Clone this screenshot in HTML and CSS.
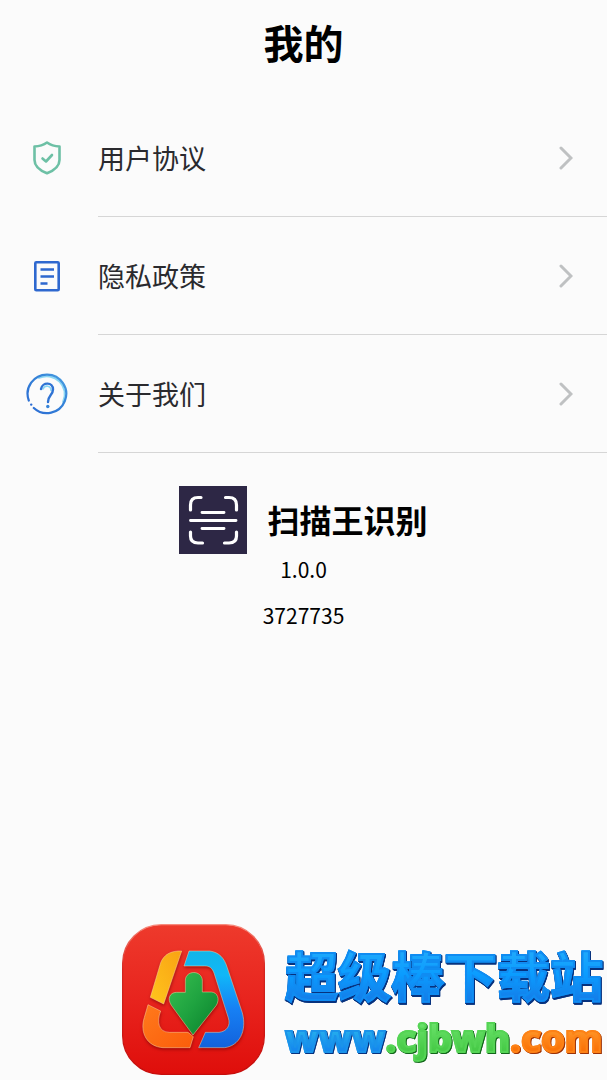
FILE: index.html
```html
<!DOCTYPE html>
<html lang="zh-CN">
<head>
  <meta charset="UTF-8" />
  <meta name="viewport" content="width=device-width, initial-scale=1.0" />
  <title>我的</title>
  <link rel="stylesheet" href="styles.css">
</head>
<body>

  <!-- Header -->
  <header class="header">
    <h1>我的</h1>
  </header>

  <!-- Menu -->
  <nav class="menu">
    <a class="menu-item" href="#">
      <span class="menu-icon">
        <svg width="42" height="42" viewBox="0 0 42 42" fill="none" stroke="#6dc0a5" stroke-width="2.6" stroke-linejoin="round" stroke-linecap="round">
          <path d="M21 5.500C17.500 8 13 9.300 8.500 9.500V23C8.500 29 14 33.500 21 36.300C28 33.500 33.500 29 33.500 23V9.500C29 9.300 24.500 8 21 5.500Z" />
          <path d="M16.500 21.500L20 24.500L26 18" />
        </svg>
      </span>
      <span class="menu-label">用户协议</span>
      <svg class="arrow" width="14" height="24" viewBox="0 0 14 24"><path d="M2 2L12 12L2 22" /></svg>
    </a>
    <a class="menu-item" href="#">
      <span class="menu-icon">
        <svg width="42" height="42" viewBox="0 0 42 42" fill="none" stroke="#2e68cf" stroke-width="2.600">
          <rect x="9.300" y="7.300" width="23.400" height="28" rx="1" />
          <path d="M14.500 14.500H28M14.500 21.500H28M14.500 28.500H21.500" />
        </svg>
      </span>
      <span class="menu-label">隐私政策</span>
      <svg class="arrow" width="14" height="24" viewBox="0 0 14 24"><path d="M2 2L12 12L2 22" /></svg>
    </a>
    <a class="menu-item" href="#">
      <span class="menu-icon">
        <svg width="42" height="42" viewBox="-1 -1 42 42" fill="none" stroke-linecap="round">
          <defs>
            <linearGradient id="ring" x1="0" y1="1" x2="1" y2="0">
              <stop offset="0" stop-color="#2b6bd3" />
              <stop offset="0.600" stop-color="#3583d8" />
              <stop offset="1" stop-color="#4a9fe2" />
            </linearGradient>
          </defs>
          <path d="M12 4A18 18 0 0 1 36 28" stroke="#8ad6f3" stroke-width="1.800" />
          <path d="M1.800 26.500A19.300 19.300 0 1 1 6.800 34" stroke="url(#ring)" stroke-width="2.200" />
          <circle cx="4.200" cy="30.600" r="1.200" fill="#2b6bd3" />
          <path d="M16 15C18 10.500 24 11.500 24 16.500" stroke="#8ad6f3" stroke-width="1.600" />
          <path d="M14 15C15.500 7.500 26 8 26 15.500C26 21 21 21 21 28" stroke="#2f73d4" stroke-width="2.400" />
          <circle cx="20.800" cy="32.500" r="1.700" fill="#3583d8" />
        </svg>
      </span>
      <span class="menu-label">关于我们</span>
      <svg class="arrow" width="14" height="24" viewBox="0 0 14 24"><path d="M2 2L12 12L2 22" /></svg>
    </a>
  </nav>

  <!-- App info -->
  <main class="about">
    <div class="app">
      <svg class="app-icon" width="68" height="68" viewBox="0 0 68 68" fill="none" stroke="#fff" stroke-width="3.200" stroke-linecap="round">
        <rect width="68" height="68" fill="#2d2745" stroke="none" />
        <path d="M11.500 24V19Q11.500 11.500 19 11.500H22M46.500 11.500H50Q57.500 11.500 57.500 19V24M11.500 46V50Q11.500 57 19 57H23.500M45.500 57H50Q57.500 57 57.500 50V46" />
        <path d="M23 26.500H45M11.500 34.500H57M23 42.500H45" stroke-width="2.900" />
      </svg>
      <h2>扫描王识别</h2>
    </div>
    <p>1.0.0</p>
    <p>3727735</p>
  </main>

  <!-- Download site -->
  <footer class="site">
    <svg class="site-logo" width="143" height="151" viewBox="39 27 429 453">
      <defs>
        <linearGradient id="red" x1="0" y1="0" x2="0" y2="1">
          <stop offset="0" stop-color="#ee3a2c" />
          <stop offset="0.500" stop-color="#e8241e" />
          <stop offset="1" stop-color="#df0e0b" />
        </linearGradient>
        <linearGradient id="edge" x1="0" y1="0" x2="0" y2="1">
          <stop offset="0" stop-color="#f78a7c" />
          <stop offset="0.300" stop-color="#d5251f" />
          <stop offset="1" stop-color="#c60d0b" />
        </linearGradient>
        <linearGradient id="yellow" x1="1" y1="0" x2="0" y2="1">
          <stop offset="0" stop-color="#f9a213" />
          <stop offset="1" stop-color="#ffc51d" />
        </linearGradient>
        <linearGradient id="orange" x1="0" y1="0" x2="1" y2="1">
          <stop offset="0" stop-color="#ff7a1c" />
          <stop offset="1" stop-color="#fb5d0b" />
        </linearGradient>
        <linearGradient id="blue" x1="0" y1="0" x2="0" y2="1">
          <stop offset="0" stop-color="#12b5e8" />
          <stop offset="0.250" stop-color="#10b7f8" />
          <stop offset="0.600" stop-color="#1780f4" />
          <stop offset="1" stop-color="#1262dc" />
        </linearGradient>
        <linearGradient id="green" x1="0" y1="0" x2="1" y2="1">
          <stop offset="0.100" stop-color="#34b94d" />
          <stop offset="0.500" stop-color="#1fa340" />
          <stop offset="1" stop-color="#087f2b" />
        </linearGradient>
      </defs>
      <rect x="41" y="29" width="425" height="449" rx="116" fill="url(#red)" stroke="url(#edge)" stroke-width="4" />
      <g class="logo-parts">
        <path d="M218 108H207C181 110 164 121 155 143L124 247L164 267Z" fill="url(#yellow)" />
        <path d="M117 269L155 288C142 322 149 351 181 352H237L253 365L243 398H162C115 395 91 354 106 307Z" fill="url(#orange)" />
        <path d="M240 108H302C331 112 346 129 355 158L400 293C415 349 390 393 347 398H269L289 352H330C354 349 365 332 358 309L315 174C309 158 301 153 287 153H225Z" fill="url(#blue)" />
        <path d="M229 232V195C231 165 277 165 280 195V231H307C326 232 333 253 322 271L252 360L187 271C174 251 182 233 202 232Z" fill="url(#green)" />
      </g>
    </svg>
    <div class="site-text">
      <strong class="site-name">超级棒下载站</strong>
      <a class="site-url" href="#"><span class="url-blue">www</span><span class="url-green">.cjbwh</span><span class="url-orange">.com</span></a>
    </div>
  </footer>

</body>
</html>
```
FILE: styles.css
```css
* {
  box-sizing: border-box;
}

body {
  margin: 0;
  min-height: 100vh;
  display: flex;
  flex-direction: column;
  background-color: #fbfbfb;
  color: #000;
  font-family: "Noto Sans CJK SC", sans-serif;
}

h1, h2, p {
  margin: 0;
}

/* Header */
.header {
  padding: 12px 0 27px;
  text-align: center;
}

h1 {
  font-size: 40px;
  line-height: 60px;
}

/* Menu, the divider starts at the label */
.menu-item {
  display: flex;
  align-items: center;
  height: 118px;
  padding-left: 26px;
  background: linear-gradient(#d6d6d6, #d6d6d6) 98px 100% / 100% 1px no-repeat;
  color: #2a2a2e;
  text-decoration: none;
}

.menu-icon {
  display: flex;
  width: 72px;
}

.menu-label {
  flex: 1;
  padding-bottom: 2px;
  font-size: 27px;
}

.arrow {
  margin-right: 34px;
  fill: none;
  stroke: #bfc1c2;
  stroke-width: 3;
  stroke-linecap: round;
}

/* App info */
.about {
  padding-top: 33px;
  text-align: center;
}

.app {
  display: flex;
  justify-content: center;
  align-items: center;
  gap: 20px;
}

h2 {
  padding-bottom: 2px;
  font-size: 32px;
  line-height: 48px;
}

.about p {
  font-size: 21px;
  line-height: 30px;
  margin-bottom: 16px;
}

/* Download site */
.site {
  display: flex;
  align-items: center;
  justify-content: flex-end;
  gap: 20px;
  margin-top: auto;
  padding: 0 4px 5px 0;
}

.site-logo {
  flex: none;
}

.logo-parts {
  filter: drop-shadow(1px 5px 4px rgba(110, 0, 0, 0.6));
  stroke: rgba(255, 225, 170, 0.7);
  stroke-width: 2;
}

.site-text {
  display: flex;
  flex-direction: column;
  padding-bottom: 2px;
  white-space: nowrap;
}

.site-name,
.site-url span {
  color: transparent;
  -webkit-background-clip: text;
  background-clip: text;
}

.site-name {
  font-size: 53px;
  font-weight: 700;
  line-height: 77px;
  background-image: linear-gradient(#1fa9fb 20%, #0a9cff 50%, #1677e4 90%);
  -webkit-text-stroke: 2px #108cf2;
  filter: drop-shadow(1px 1px 0 #07327e) drop-shadow(0 1px 0 #07327e);
}

.site-url {
  display: flex;
  font-family: "Noto Sans", sans-serif;
  font-size: 38px;
  font-weight: 800;
  line-height: 48px;
  text-decoration: none;
}

.url-blue {
  background-image: linear-gradient(#27b5ed 30%, #1589ee 75%);
  -webkit-text-stroke: 2px #1a93ea;
  filter: drop-shadow(1px 1px 0 #07327e);
}

.url-green {
  background-image: linear-gradient(#6be36b 20%, #48cb48 75%);
  -webkit-text-stroke: 2px #55d455;
  filter: drop-shadow(1px 1px 0 #12661a);
}

.url-orange {
  background-image: linear-gradient(#ff9a2c 30%, #fb7408 75%);
  -webkit-text-stroke: 2px #fd8216;
  filter: drop-shadow(1px 1px 0 #9c3206);
}
```
